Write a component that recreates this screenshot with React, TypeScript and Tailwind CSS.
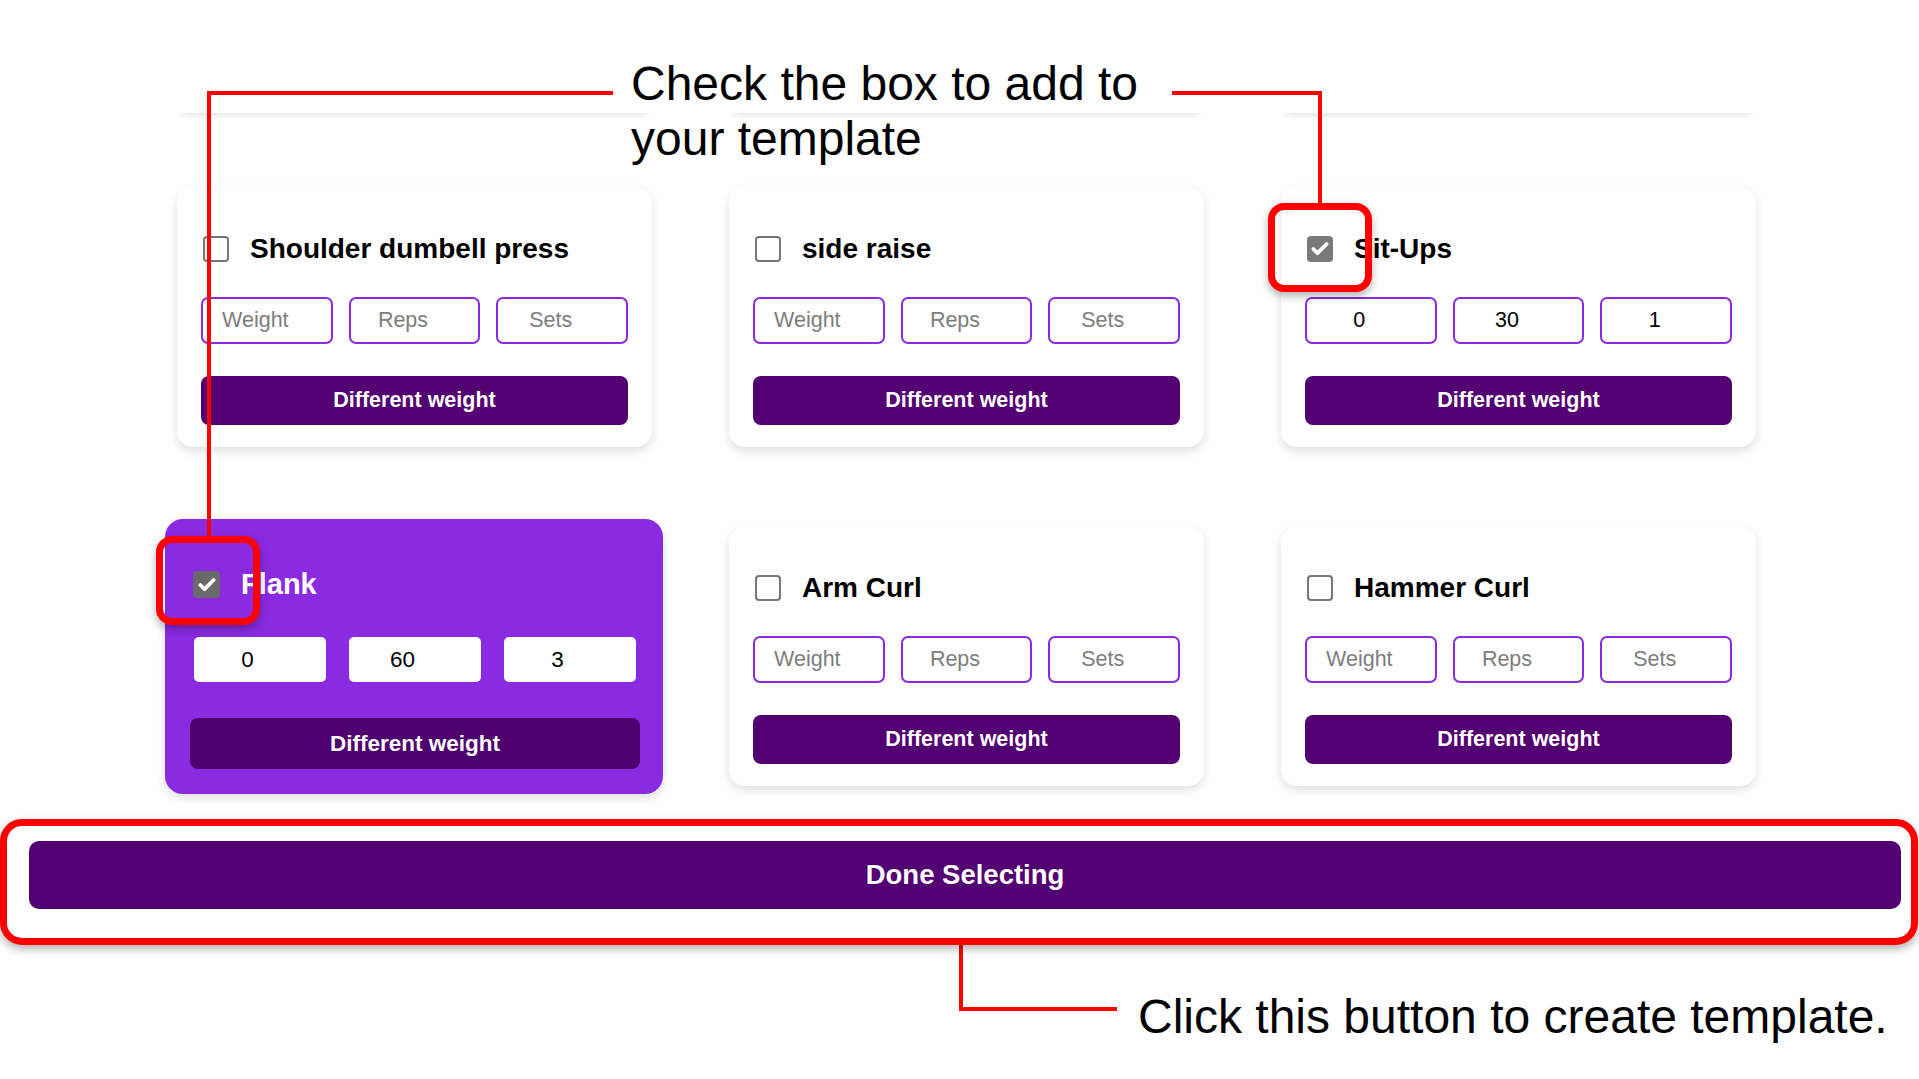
import { Check } from 'lucide-react'

type Exercise = {
  name: string
  checked?: boolean
  values?: [string, string, string]
}

const rowOne: Exercise[] = [
  { name: 'Shoulder dumbell press' },
  { name: 'side raise' },
  { name: 'Sit-Ups', checked: true, values: ['0', '30', '1'] },
]

const rowTwo: Exercise[] = [
  { name: 'Arm Curl' },
  { name: 'Hammer Curl' },
]

const placeholders = ['Weight', 'Reps', 'Sets']

function Box({ checked, dark }: { checked?: boolean; dark?: boolean }) {
  if (checked) {
    return (
      <span
        className={`flex shrink-0 items-center justify-center rounded-[4px] ${
          dark ? 'h-[27px] w-[27px] bg-[#6a6a6a]' : 'ml-[2px] h-[26px] w-[26px] bg-[#7a7a7a]'
        }`}
      >
        <Check size={20} strokeWidth={4.5} className="text-white" />
      </span>
    )
  }
  return <span className="ml-[2px] block h-[26px] w-[26px] shrink-0 rounded-[4px] border-2 border-[#767676] bg-white" />
}

function ExerciseCard({ item }: { item: Exercise }) {
  return (
    <div className="flex h-[260px] flex-col rounded-2xl bg-white px-[24px] pt-[49px] shadow-[0_4px_10px_rgba(0,0,0,0.13)]">
      <div className="flex h-[25px] items-center gap-[21px]">
        <Box checked={item.checked} />
        <span className="text-[28px] font-bold leading-[25px] text-black">{item.name}</span>
      </div>

      <div className="mt-[36px] grid grid-cols-3 gap-4">
        {placeholders.map((p, i) => (
          <input
            key={p}
            placeholder={p}
            defaultValue={item.values ? item.values[i] : ''}
            className="h-[47px] w-full min-w-0 rounded-[7px] border-[2.5px] border-[#8a2be2] bg-white pr-[23px] text-center text-[21.5px] text-black outline-none placeholder:text-[#7d7d7d]"
          />
        ))}
      </div>

      <button className="mt-[32px] h-[49px] w-full rounded-[8px] bg-[#520072] text-[21.5px] font-bold text-white">
        Different weight
      </button>
    </div>
  )
}

function SelectedCard() {
  return (
    <div className="-mb-[7px] -ml-[12px] -mr-[11px] -mt-[7px] flex h-[275px] flex-col rounded-[18px] bg-[#8a2be2] pb-[25px] pl-[25px] pr-[23px] pt-[52px] shadow-[0_4px_10px_rgba(0,0,0,0.13)]">
      <div className="flex h-[27px] items-center gap-[21px] pl-[3px]">
        <Box checked dark />
        <span className="text-[29px] font-bold leading-[27px] text-white">Flank</span>
      </div>

      <div className="mt-[39px] grid grid-cols-3 gap-[23px] px-[4px]">
        {['0', '60', '3'].map((v) => (
          <input
            key={v}
            defaultValue={v}
            className="h-[45px] w-full min-w-0 rounded-[5px] bg-white pr-[25px] text-center text-[22.5px] text-black outline-none"
          />
        ))}
      </div>

      <button className="mt-[36px] h-[51px] w-full rounded-[8px] bg-[#4f006f] text-[22.5px] font-bold text-white">
        Different weight
      </button>
    </div>
  )
}

export default function App() {
  return (
    <div className="relative h-[1079px] w-[1919px] overflow-hidden bg-white font-['Liberation_Sans',Arial,sans-serif]">
      {/* exercise grid, scrolled so the first row is out of view */}
      <div className="ml-[177px] grid w-[1579px] grid-cols-3 gap-x-[77px] gap-y-[79px]">
        <div className="-mb-[5px] h-[113px] bg-white shadow-[0_8px_6px_-6px_rgba(0,0,0,0.12)]" />
        <div className="-mb-[5px] h-[113px] bg-white shadow-[0_8px_6px_-6px_rgba(0,0,0,0.12)]" />
        <div className="-mb-[5px] h-[113px] bg-white shadow-[0_8px_6px_-6px_rgba(0,0,0,0.12)]" />

        {rowOne.map((item) => (
          <ExerciseCard key={item.name} item={item} />
        ))}

        <SelectedCard />
        {rowTwo.map((item) => (
          <ExerciseCard key={item.name} item={item} />
        ))}
      </div>

      <div className="ml-[29px] mt-[54px] w-[1872px]">
        <button className="h-[68px] w-full rounded-[10px] bg-[#520072] text-[27.5px] font-bold text-white">
          Done Selecting
        </button>
      </div>

      {/* tutorial annotations */}
      <p className="absolute left-[631px] top-[56px] text-[48px] leading-[55px] text-black">
        Check the box to add to
        <br />
        your template
      </p>
      <p className="absolute left-[1138px] top-[989px] whitespace-nowrap text-[48px] leading-[55px] text-black">
        Click this button to create template.
      </p>

      <span className="absolute left-[207px] top-[91px] h-[4px] w-[406px] bg-[#ff0000]" />
      <span className="absolute left-[207px] top-[91px] h-[446px] w-[4px] bg-[#ff0000]" />
      <span className="absolute left-[1172px] top-[91px] h-[4px] w-[150px] bg-[#ff0000]" />
      <span className="absolute left-[1318px] top-[91px] h-[113px] w-[4px] bg-[#ff0000]" />
      <span className="absolute left-[959px] top-[944px] h-[67px] w-[4px] bg-[#ff0000]" />
      <span className="absolute left-[959px] top-[1007px] h-[4px] w-[158px] bg-[#ff0000]" />

      <span className="absolute left-[1268px] top-[203px] h-[89px] w-[104px] rounded-[16px] border-[7px] border-[#ff0000] shadow-[0_4px_8px_rgba(0,0,0,0.3)]" />
      <span className="absolute left-[156px] top-[536px] h-[89px] w-[104px] rounded-[16px] border-[7px] border-[#ff0000] shadow-[0_4px_8px_rgba(0,0,0,0.3)]" />
      <span className="absolute left-[0px] top-[819px] h-[126px] w-[1918px] rounded-[22px] border-[7px] border-[#ff0000] shadow-[0_4px_8px_rgba(0,0,0,0.3)]" />
    </div>
  )
}
